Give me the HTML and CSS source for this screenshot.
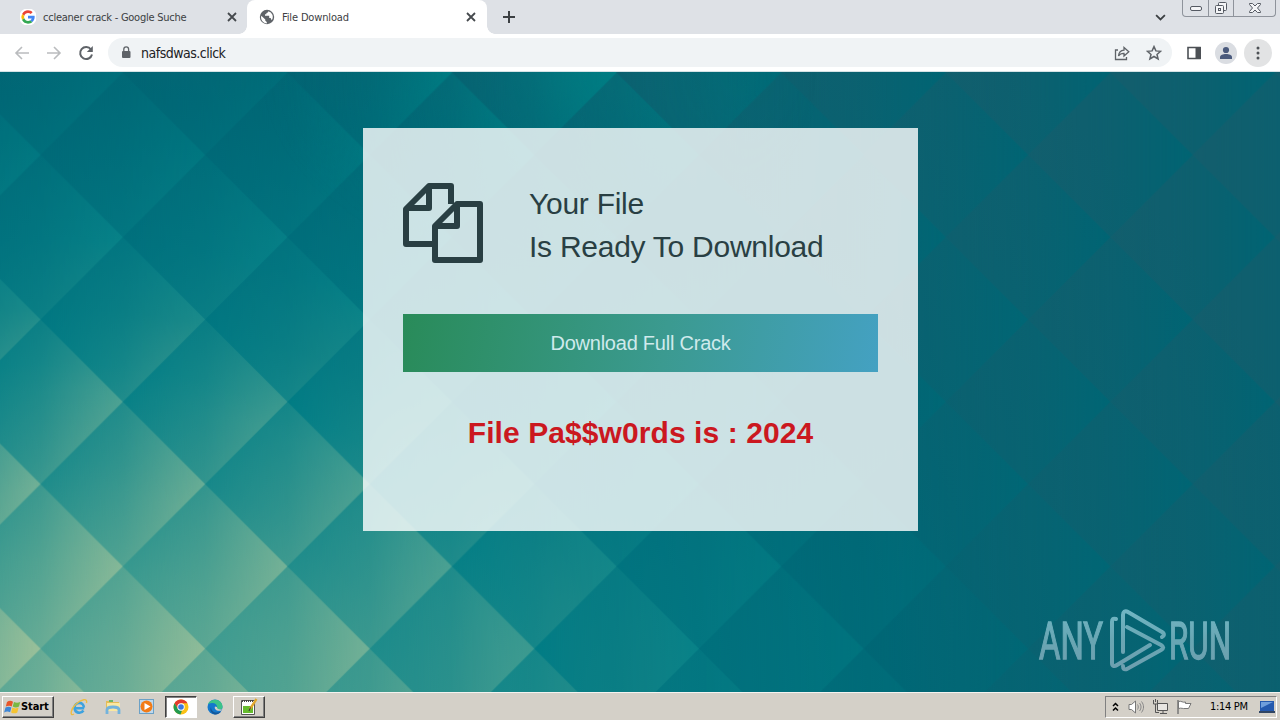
FILE: index.html
```html
<!DOCTYPE html>
<html lang="en">
<head>
    <meta charset="UTF-8">
    <meta name="viewport" content="width=device-width, initial-scale=1.0">
    <title>File Download</title>
    <link rel="stylesheet" href="styles.css">
</head>
<body>
    <div class="tabs">
        <div class="tab">
            <svg class="favicon" viewBox="0 0 48 48">
                <circle cx="24" cy="24" r="26" fill="#fff"/>
                <path fill="#ea4335" d="M24 12c3.300 0 6 1.200 8.200 3.200l5.600-5.600C34.200 6.200 29.400 4 24 4 16.200 4 9.500 8.400 6.200 14.900l6.700 5.200C14.500 15.400 18.900 12 24 12z"/>
                <path fill="#fbbc05" d="M12.900 28a12 12 0 0 1 0-7.900l-6.700-5.200a20 20 0 0 0 0 18.200z"/>
                <path fill="#34a853" d="M24 44c5.400 0 10-1.800 13.300-4.900l-6.500-5c-1.800 1.200-4.100 1.900-6.800 1.900-5.100 0-9.500-3.400-11.100-8l-6.700 5.100C9.500 39.600 16.200 44 24 44z"/>
                <path fill="#4285f4" d="M43.500 20.500H24v8h11.200c-.5 2.400-1.900 4.300-4.400 5.600l6.500 5C41.400 35.400 44 30.200 44 24c0-1.200-.2-2.400-.5-3.500z"/>
            </svg>
            <span class="tab-title t1">ccleaner crack - Google Suche</span>
            <svg class="close" viewBox="0 0 10 10"><path d="M1 1l8 8M9 1l-8 8"/></svg>
        </div>
        <div class="tab active">
            <svg class="favicon" viewBox="0 0 16 16">
                <circle cx="8" cy="8" r="7.200" fill="#5f6368"/>
                <path fill="#fff" d="M2.300 6.700l4 3.800v1.300l1.500 1.300v1.300a6 6 0 0 1-5.500-7.700zM9.300 2.200c0 1.200-.8 1.700-1.900 1.700v1.400H6v1.500h4.200v2.100h1.400l1.100 2.400A5.900 5.900 0 0 0 9.300 2.200z"/>
            </svg>
            <span class="tab-title t2">File Download</span>
            <svg class="close" viewBox="0 0 10 10"><path d="M1 1l8 8M9 1l-8 8"/></svg>
        </div>
        <svg class="plus" viewBox="0 0 12 12"><path d="M6 0v12M0 6h12"/></svg>
        <svg class="chevron" viewBox="0 0 10 6"><path d="M1 .8l4 4 4-4"/></svg>
        <div class="window-buttons">
            <span><svg width="14" height="8" viewBox="0 0 14 8"><rect x="1.500" y="2.500" width="11" height="4" rx="1.500"/></svg></span>
            <span><svg width="14" height="14" viewBox="0 0 14 14"><rect x="4.500" y="1.500" width="8" height="8" rx="1"/><rect x="1.500" y="4.500" width="8" height="8" rx="1"/><rect x="4.500" y="7.500" width="2" height="2"/></svg></span>
            <span><svg width="14" height="12" viewBox="0 0 14 12"><path d="M1.500 1.500h3L7 4l2.500-2.500h3v1L9.500 6l3 3.500v1h-3L7 8l-2.500 2.500h-3v-1L4.500 6l-3-3.500z"/></svg></span>
        </div>
    </div>

    <div class="toolbar">
        <svg class="nav off" viewBox="0 0 16 16"><path d="M15 8H2M8 2L2 8l6 6"/></svg>
        <svg class="nav off" viewBox="0 0 16 16"><path d="M1 8h13M8 2l6 6-6 6"/></svg>
        <svg class="nav" viewBox="0 0 16 16"><path d="M13 4.500A6 6 0 1 0 14 9.500"/><path d="M14.800 1v6H8.800z" fill="#5f6368" stroke="none"/></svg>
        <div class="address">
            <svg class="lock" viewBox="0 0 10 13"><rect x="1" y="5" width="8.500" height="7" rx="1" fill="#5f6368"/><path d="M2.800 5V3.300a2.400 2.400 0 0 1 4.800 0V5" fill="none" stroke="#5f6368" stroke-width="1.300"/></svg>
            <span class="url">nafsdwas.click</span>
            <svg class="share" viewBox="0 0 16 16"><path d="M4 5H1.500v9.500h11V12"/><path d="M4.500 11c.4-4 2.600-5.600 5.500-5.800V2.500l4.800 4.300L10 11V8.300C7.500 8.200 5.800 9 4.500 11z"/></svg>
            <svg class="star" viewBox="0 0 16 16"><path d="M8 1.600l1.900 4.300 4.700.4-3.600 3.100 1.100 4.600L8 11.500 3.900 14 5 9.400 1.400 6.300l4.700-.4z"/></svg>
        </div>
        <svg class="panel" viewBox="0 0 14 14"><path d="M1 1.500h12v11H1z" fill="none" stroke="#4c5055" stroke-width="1.600"/><path d="M8.500 1H14v12H8.500z" fill="#4c5055"/></svg>
        <div class="round avatar"><svg width="14" height="14" viewBox="0 0 14 14"><circle cx="7" cy="4" r="3.100"/><path d="M1 13v-2c0-2 3-3.100 6-3.100s6 1.100 6 3.100v2z"/></svg></div>
        <div class="round more"><svg width="4" height="14" viewBox="0 0 4 14"><circle cx="2" cy="2" r="1.500"/><circle cx="2" cy="7" r="1.500"/><circle cx="2" cy="12" r="1.500"/></svg></div>
    </div>

    <div class="page">
        <svg class="backdrop" width="1280" height="620" viewBox="0 0 1280 620">
            <defs>
                <radialGradient id="dark" gradientUnits="userSpaceOnUse" cx="0" cy="0" r="1300" gradientTransform="translate(60 668) scale(1 .77)">
                    <stop offset="0" stop-color="#58a796"/>
                    <stop offset=".1" stop-color="#4aa093"/>
                    <stop offset=".18" stop-color="#36988f"/>
                    <stop offset=".28" stop-color="#16888a"/>
                    <stop offset=".38" stop-color="#007c85"/>
                    <stop offset=".5" stop-color="#00707d"/>
                    <stop offset=".64" stop-color="#006675"/>
                    <stop offset=".78" stop-color="#0c6170"/>
                    <stop offset="1" stop-color="#145e6d"/>
                </radialGradient>
                <radialGradient id="light" gradientUnits="userSpaceOnUse" cx="0" cy="0" r="1300" gradientTransform="translate(60 668) scale(1 .77)">
                    <stop offset="0" stop-color="#a6c59b"/>
                    <stop offset=".11" stop-color="#98bf99"/>
                    <stop offset=".25" stop-color="#74b196"/>
                    <stop offset=".35" stop-color="#4aa092"/>
                    <stop offset=".43" stop-color="#1c8b8a"/>
                    <stop offset=".5" stop-color="#078288"/>
                    <stop offset=".6" stop-color="#007680"/>
                    <stop offset=".72" stop-color="#006876"/>
                    <stop offset="1" stop-color="#006473"/>
                </radialGradient>
                <radialGradient id="glow" gradientUnits="userSpaceOnUse" cx="0" cy="0" r="280" gradientTransform="translate(540 0) scale(1 .7)">
                    <stop offset="0" stop-color="#00888a" stop-opacity=".9"/>
                    <stop offset="1" stop-color="#00888a" stop-opacity="0"/>
                </radialGradient>
                <linearGradient id="a" gradientUnits="userSpaceOnUse" x1="0" x2="164.600" y1="0" y2="0"><stop offset="0" stop-color="#000"/><stop offset=".5" stop-color="#585858"/><stop offset="1" stop-color="#fff"/></linearGradient>
                <linearGradient id="b" gradientUnits="userSpaceOnUse" x1="-82.300" x2="82.300" y1="0" y2="0"><stop offset="0" stop-color="#000"/><stop offset=".5" stop-color="#585858"/><stop offset="1" stop-color="#fff"/></linearGradient>
                <linearGradient id="c" gradientUnits="userSpaceOnUse" x1="82.300" x2="246.900" y1="0" y2="0"><stop offset="0" stop-color="#000"/><stop offset=".5" stop-color="#585858"/><stop offset="1" stop-color="#fff"/></linearGradient>
                <pattern id="diamonds" patternUnits="userSpaceOnUse" x="40.500" y=".6" width="164.600" height="164.600">
                    <path fill="url(#b)" d="M0 0h82.300v164.600H0z"/>
                    <path fill="url(#c)" d="M82.300 0h82.300v164.600H82.300z"/>
                    <path fill="url(#a)" d="M0 82.300L82.300 0l82.300 82.300-82.300 82.300z"/>
                </pattern>
                <mask id="tiles"><rect width="1280" height="620" fill="url(#diamonds)"/></mask>
            </defs>
            <rect width="1280" height="620" fill="url(#dark)"/>
            <rect width="1280" height="620" fill="url(#light)" mask="url(#tiles)"/>
            <rect width="1280" height="620" fill="url(#glow)" mask="url(#tiles)"/>
        </svg>

        <div class="card">
            <div class="heading">
                <svg class="files" viewBox="0 0 80 80">
                    <path d="M29 61H3V26L26 3h22v18M26 3v22H3"/>
                    <path d="M32 43v34h45V21H54zM54 21v22H32"/>
                </svg>
                <h1>Your File<br>Is Ready To Download</h1>
            </div>
            <button class="download">Download Full Crack</button>
            <h2>File Pa$$w0rds is : 2024</h2>
        </div>

        <svg class="watermark" viewBox="0 0 210 66">
            <defs>
                <linearGradient id="wm" gradientUnits="userSpaceOnUse" x1="0" x2="0" y1="3" y2="63"><stop offset="0" stop-color="#7dc0cd"/><stop offset=".5" stop-color="#74aebb"/><stop offset="1" stop-color="#7aa6b6"/></linearGradient>
            </defs>
            <text x="2" y="52" textLength="64" lengthAdjust="spacingAndGlyphs">ANY</text>
            <text x="132" y="52" textLength="62" lengthAdjust="spacingAndGlyphs">RUN</text>
            <path d="M79 12c-3-1-4 0-4 3v41c0 3 2 4 5 2l33-20M86 45V8c0-3 2-5 5-3l34 20c3 2 2 4 0 5M90 20l34 18c3 2 3 3 0 5L90 62c-3 1-4 0-4-3"/>
        </svg>
    </div>

    <div class="taskbar">
        <div class="start">
            <svg width="17" height="16" viewBox="0 0 17 16">
                <path fill="#e8562a" d="M3 3c2-1.500 4-1.500 6-.3L7.700 7.400C6 6.300 4 6.400 1.800 7.600z"/>
                <path fill="#79b843" d="M10 3c2 1.100 4 1.100 6.200 0L15 7.500c-2 1.200-4.200 1.200-6.300 0z"/>
                <path fill="#3d86d6" d="M1.500 8.600c2-1.200 4-1.200 5.900-.2l-1.300 4.800c-1.900-1.100-3.900-1-6 .2z"/>
                <path fill="#f5c432" d="M8.400 8.600c2 1.100 4 1.100 6.200 0l-1.300 4.800c-2 1.200-4.200 1.100-6.200 0z"/>
            </svg>
            <b>Start</b>
        </div>
        <div class="task">
            <svg width="18" height="18" viewBox="0 0 18 18"><path d="M14.200 10.200H4.600c.2 5 6.500 6 8.800 2.300M4.600 9.500c0-6 9-6.200 9.300 0" fill="none" stroke="#3da2df" stroke-width="2.600"/><path d="M4 16C-.5 19 .5 11 6 6c5-4.600 12-6.500 10.500-1" fill="none" stroke="#edbd42" stroke-width="1.400"/></svg>
        </div>
        <div class="task">
            <svg width="18" height="18" viewBox="0 0 18 18"><path fill="#e4bd58" d="M2 3h5l1 1h7v8H2z"/><path fill="#fae8a1" d="M3 5h13v8H3z"/><path fill="#69b66a" d="M5 2h4v2H5z"/><path d="M3 16v-4c0-2 2-3 6-3s6 1 6 3v4" fill="none" stroke="#73b3dc" stroke-width="2.800"/></svg>
        </div>
        <div class="task">
            <svg width="18" height="18" viewBox="0 0 18 18"><rect x="1.500" y="1.500" width="14" height="14" fill="#bfd9ed" stroke="#6ca1c6"/><circle cx="8.500" cy="8.500" r="6" fill="#f27b16"/><path fill="#fff" d="M6.500 5l6 3.500-6 3.500z"/></svg>
        </div>
        <div class="task running current">
            <svg width="18" height="18" viewBox="0 0 18 18"><circle cx="9" cy="9" r="7.500" fill="#fbc116"/><path fill="#e33b2e" d="M2.500 5.300a7.500 7.500 0 0 1 13 0H9L6 11z"/><path fill="#219a50" d="M2.500 5.300L6 11l4 1.500-1.500 4A7.500 7.500 0 0 1 2.500 5.300z"/><circle cx="9" cy="9" r="3.700" fill="#fff"/><circle cx="9" cy="9" r="2.800" fill="#3b78e0"/></svg>
        </div>
        <div class="task">
            <svg width="18" height="18" viewBox="0 0 18 18"><circle cx="9" cy="9" r="7.500" fill="#1478cc"/><path fill="#3cc389" d="M5 2.700c6-3 12 1 11.500 6.500-.5 3-4.500 3-5.500 1.500C12 6 8 3.500 2 6c.5-1.500 1.500-2.500 3-3.300z"/><path fill="#145799" d="M5 9c0 5 5 7 10 4.500-3 4-7 3.500-9 1.500S4 11 5 9z"/><path fill="#d4d0c8" d="M9 8.500c-1 2 1 5 6 4.200l1.500-1.200C12 12 11 10.500 11 9z"/></svg>
        </div>
        <div class="task running">
            <svg width="18" height="18" viewBox="0 0 18 18"><path fill="#fff" stroke="#555" d="M1.500 2.500h13v14h-13z"/><path fill="#66bb2e" d="M3 8h10v7H3z"/><path d="M2 3h12" stroke="#444" stroke-width="2" stroke-dasharray="1 1"/><path d="M16.500 1L10 11" stroke="#e1a72c" stroke-width="2.300"/><path d="M10.500 9.500L9 13" stroke="#333"/></svg>
        </div>

        <div class="tray">
            <svg class="up" width="7" height="10" viewBox="0 0 7 10"><path d="M1 4l2.500-2.500L6 4M1 8.500L3.500 6 6 8.500" fill="none" stroke="#000" stroke-width="1.500"/></svg>
            <svg class="sound" width="17" height="16" viewBox="0 0 17 16"><path d="M1 5.500h2.500L7.500 2v12l-4-3.500H1z" fill="#fff" stroke="#777"/><path d="M9.500 5.500c1 1.500 1 3.500 0 5M11.500 4c2 2.500 2 5.500 0 8M13.500 2.500c2.700 3.500 2.700 7.500 0 11" fill="none" stroke="#888"/></svg>
            <svg class="net" width="17" height="16" viewBox="0 0 17 16"><path d="M5.500 4.500h10v7h-10zM8 14.500h7M11 12v2" fill="#e8e6e2" stroke="#555"/><path d="M1.500 1v4h4V1M3.500 5v8.500H7M3.500 0v3" fill="none" stroke="#555"/></svg>
            <svg class="flag" width="17" height="16" viewBox="0 0 17 16"><path d="M2.500 2.500c3-1 4 1.500 7 .5v1.500h5.500l-2.500 5H9c-2 .5-3.500-1-6.500 0z" fill="#fff" stroke="#777"/><path d="M2 1v14" stroke="#777" stroke-width="1.500"/></svg>
            <span class="clock">1:14 PM</span>
            <svg class="desk" width="16" height="14" viewBox="0 0 16 14"><path fill="#2459ae" d="M1 1h14v10H1z"/><path fill="#6f9edc" d="M2 2h12L2 8z"/><path fill="#304563" d="M0 11h16v2H0z"/></svg>
        </div>
    </div>
</body>
</html>
```
FILE: styles.css
```css
*{
    box-sizing: border-box;
}
body{
    margin: 0;
    width: 1280px;
    height: 720px;
    overflow: hidden;
    display: flex;
    flex-direction: column;
    font-family: "DejaVu Sans Condensed", "DejaVu Sans", sans-serif;
}
svg{
    display: block;
    flex: none;
}

/* tab strip */
.tabs{
    position: relative;
    display: flex;
    align-items: center;
    height: 34px;
    background: #dee1e6;
}
.tab{
    display: flex;
    align-items: center;
    width: 247px;
    height: 34px;
    padding: 0 10px 0 20px;
    color: #3c4043;
}
.tab.active{
    position: relative;
    width: 240px;
    padding: 0 11px 0 12px;
    background: #fff;
    border-radius: 8px 8px 0 0;
}
.tab.active::before, .tab.active::after{
    content: "";
    position: absolute;
    bottom: 0;
    width: 8px;
    height: 8px;
}
.tab.active::before{
    left: -8px;
    background: radial-gradient(circle at 0 0, transparent 7.500px, #fff 8px);
}
.tab.active::after{
    right: -8px;
    background: radial-gradient(circle at 100% 0, transparent 7.500px, #fff 8px);
}
.favicon{
    width: 16px;
    height: 16px;
    margin-right: 7px;
}
.tab-title{
    font-size: 11px;
    white-space: nowrap;
    flex: 1;
}
.t1{
    letter-spacing: -0.240px;
}
.t2{
    letter-spacing: -0.150px;
}
.close{
    width: 10px;
    height: 10px;
    fill: none;
    stroke: #45494d;
    stroke-width: 1.800;
}
.plus{
    width: 12px;
    height: 12px;
    margin-left: 16px;
    stroke: #3c4043;
    stroke-width: 2;
}
.chevron{
    width: 11px;
    height: 7px;
    margin-left: auto;
    margin-right: 114px;
    fill: none;
    stroke: #3c4043;
    stroke-width: 1.600;
}
.window-buttons{
    position: absolute;
    top: 0;
    right: 4px;
    display: flex;
    height: 17px;
    border: 1px solid #8e939b;
    border-top: 0;
    border-radius: 0 0 4px 4px;
}
.window-buttons span{
    display: flex;
    align-items: center;
    justify-content: center;
    width: 25px;
}
.window-buttons span + span{
    border-left: 1px solid #8e939b;
}
.window-buttons span:last-child{
    width: 42px;
}
.window-buttons svg{
    fill: #f4f5f7;
    stroke: #555a63;
}

/* toolbar */
.toolbar{
    display: flex;
    align-items: center;
    height: 38px;
    padding: 0 8px 0 14px;
    background: #fff;
    border-bottom: 1px solid #d5e2e5;
}
.nav{
    width: 16px;
    height: 16px;
    margin-right: 16px;
    fill: none;
    stroke: #5f6368;
    stroke-width: 2;
}
.nav.off{
    stroke: #babcbe;
    stroke-width: 1.600;
}
.address{
    display: flex;
    align-items: center;
    width: 1064px;
    height: 29px;
    margin-left: -2px;
    padding: 0 10px 0 13px;
    background: #f0f3f5;
    border-radius: 15px;
}
.lock{
    width: 10px;
    height: 13px;
    margin-right: 10px;
}
.url{
    flex: 1;
    font-size: 14px;
    letter-spacing: -0.500px;
    color: #202124;
}
.share, .star{
    width: 16px;
    height: 16px;
    margin-left: 16px;
    fill: none;
    stroke: #5f6368;
    stroke-width: 1.300;
}
.star{
    stroke-width: 1.500;
}
.panel{
    width: 14px;
    height: 14px;
    margin-left: 15px;
}
.round{
    display: flex;
    align-items: center;
    justify-content: center;
    border-radius: 50%;
}
.avatar{
    width: 22px;
    height: 22px;
    margin-left: 14px;
    background: #dadde2;
    fill: #4a5a7d;
}
.more{
    width: 28px;
    height: 28px;
    margin-left: 7px;
    background: #e2e3e4;
    fill: #4d5156;
}

/* download page */
.page{
    position: relative;
    height: 620px;
    padding-top: 56px;
    padding-left: 363px;
    background: #006878;
    font-family: "Liberation Sans", Arial, sans-serif;
}
.backdrop{
    position: absolute;
    top: 0;
    left: 0;
}
.card{
    position: relative;
    width: 555px;
    height: 403px;
    padding: 54px 40px 0;
    background: rgba(255, 255, 255, 0.8);
}
.heading{
    display: flex;
    align-items: center;
    height: 86px;
}
.files{
    width: 80px;
    height: 80px;
    margin-top: -4px;
    fill: none;
    stroke: #293f43;
    stroke-width: 6;
    stroke-linejoin: round;
}
h1{
    margin: 0 0 0 46px;
    font-size: 30px;
    font-weight: normal;
    line-height: 43px;
    letter-spacing: -0.260px;
    color: #293f43;
    white-space: nowrap;
}
.download{
    display: block;
    width: 475px;
    height: 58px;
    margin-top: 46px;
    padding: 0;
    border: none;
    background: linear-gradient(100deg, #298b59, #3b9a90 55%, #44a1c2);
    color: #cfeaec;
    font-family: "Liberation Sans", Arial, sans-serif;
    font-size: 20px;
    letter-spacing: -0.230px;
}
h2{
    margin: 43px 0 0;
    text-align: center;
    font-size: 30px;
    line-height: 36px;
    letter-spacing: 0.080px;
    color: #cb181f;
    white-space: nowrap;
}
.watermark{
    position: absolute;
    left: 1037px;
    top: 535px;
    width: 210px;
    height: 66px;
    opacity: 0.9;
}
.watermark text{
    font-family: Roboto, sans-serif;
    font-size: 52px;
    fill: url(#wm);
    stroke: url(#wm);
    stroke-width: 1.400;
}
.watermark path{
    fill: none;
    stroke: url(#wm);
    stroke-width: 4;
    stroke-linecap: round;
}

/* taskbar */
.taskbar{
    display: flex;
    align-items: center;
    height: 28px;
    padding: 0 3px 0 2px;
    background: #d4d0c8;
    border-top: 1px solid #f4f3f0;
}
.start, .running{
    border: 1px solid;
    border-color: #fff #404040 #404040 #fff;
    box-shadow: inset -1px -1px #808080;
}
.start{
    display: flex;
    align-items: center;
    width: 52px;
    height: 22px;
    margin-right: 9px;
    padding-left: 1px;
    font-size: 11px;
    letter-spacing: -0.100px;
}
.task{
    display: flex;
    align-items: center;
    justify-content: center;
    width: 32px;
    height: 22px;
    margin-right: 2px;
}
.current{
    background: #fff;
    border-color: #404040 #fff #fff #404040;
    box-shadow: inset 1px 1px #808080;
}
.tray{
    display: flex;
    align-items: center;
    width: 172px;
    height: 22px;
    margin-left: auto;
    padding-left: 6px;
    border: 1px solid;
    border-color: #808080 #fff #fff #808080;
}
.sound{
    margin-left: 9px;
}
.net, .flag{
    margin-left: 7px;
}
.clock{
    width: 41px;
    margin-left: 17px;
    font-size: 11px;
    letter-spacing: -0.300px;
    white-space: nowrap;
}
.desk{
    margin-left: 8px;
}
```
